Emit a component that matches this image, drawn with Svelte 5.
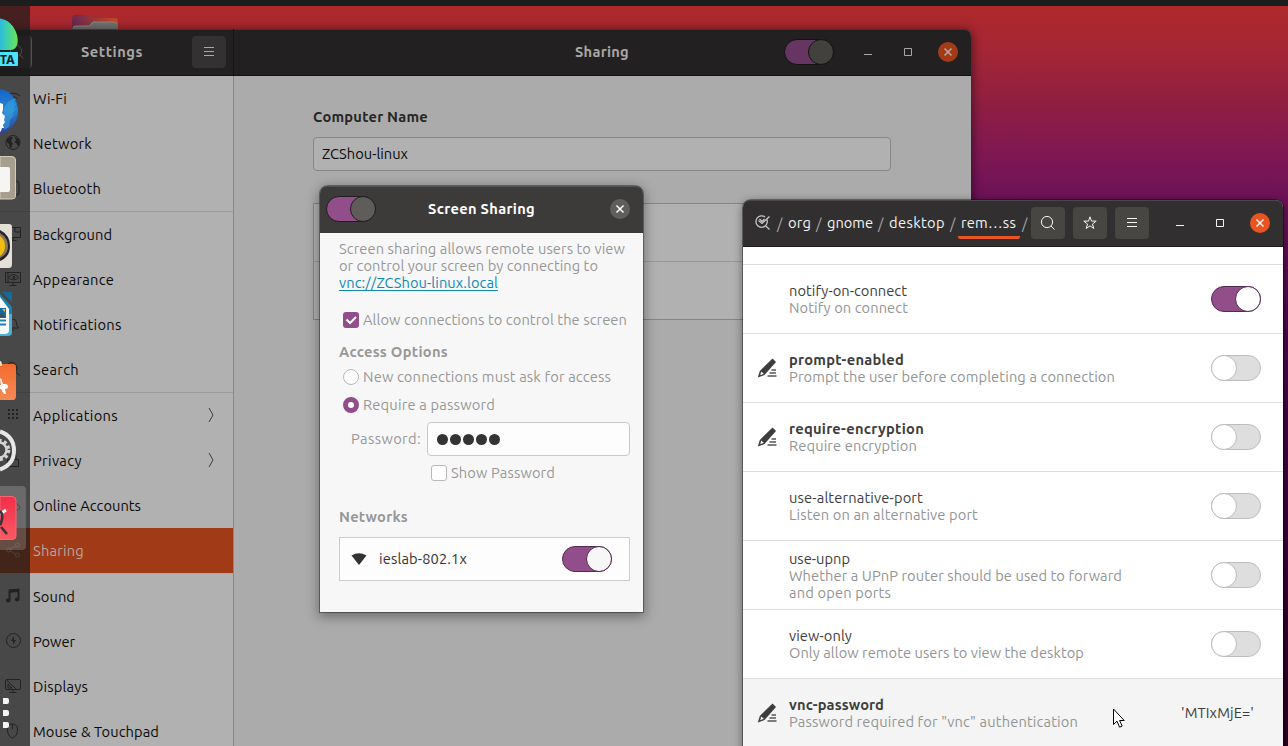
<script lang="ts">
	interface Entry {
		label: string;
		width: number;
		icon: string;
		submenu?: boolean;
		active?: boolean;
	}
	interface Key {
		name: [string, number];
		desc: [string, number][];
		changed?: boolean;
		on?: boolean;
		value?: string;
	}

	// Sidebar entries, one array per separator-delimited group.
	const groups: Entry[][] = [
		[
			{ label: 'Wi-Fi', width: 34, icon: 'wifi' },
			{ label: 'Network', width: 59, icon: 'globe' },
			{ label: 'Bluetooth', width: 68, icon: 'bluetooth' }
		],
		[
			{ label: 'Background', width: 79, icon: 'background' },
			{ label: 'Appearance', width: 81, icon: 'appearance' },
			{ label: 'Notifications', width: 88, icon: 'bell' },
			{ label: 'Search', width: 46, icon: 'search' }
		],
		[
			{ label: 'Applications', width: 85, icon: 'grid', submenu: true },
			{ label: 'Privacy', width: 49, icon: 'lock', submenu: true },
			{ label: 'Online Accounts', width: 108, icon: 'cloud' },
			{ label: 'Sharing', width: 51, icon: 'share', active: true }
		],
		[
			{ label: 'Sound', width: 42, icon: 'note' },
			{ label: 'Power', width: 42, icon: 'power' },
			{ label: 'Displays', width: 55, icon: 'display' },
			{ label: 'Mouse & Touchpad', width: 126, icon: 'mouse' }
		]
	];

	const iconPaths: Record<string, string> = {
		wifi: 'M1 6a10 10 0 0 1 14 0M3.5 8.700a6.500 6.500 0 0 1 9 0M6 11.200a3 3 0 0 1 4 0',
		bluetooth: 'M5 1h7q2 0 2 2v10q0 2-2 2H5z',
		background: 'M.5 1.500h15v10H.5zM10 1.500v4.500h5.500M8 11.500v3M4.500 14.500h7',
		appearance: 'M.5 1.500h15v10H.5zM3 2v9M3.500 6.500q4.500-6 10 0-5 5-10 0M8 5.500v2h1.500v-2zM8 12v3M4.500 14.500h7',
		bell: 'M3 12h10.500q-2-2-2-5 0-4-3.500-4T4.500 7q0 3-2 5M7 14h2',
		search: 'M6.500 1.500a5.500 5.500 0 1 0 0 11 5.500 5.500 0 1 0 0-11M10.800 10.800l4 4',
		lock: 'M2.500 7.500h11v7h-11zM5 7V4q0-3 3-3t3 3v3',
		cloud: 'M3.500 13q-3-.5-2.500-3 .5-2 2.500-2Q4 4 8 4t4.500 4q2.500.5 2.500 2.500T12.500 13z',
		share: 'M3.500 6a2 2 0 1 0 .01 4 2 2 0 1 0 0-4M12.500 1a2 2 0 1 0 .01 4 2 2 0 1 0 0-4M12.500 11a2 2 0 1 0 .01 4 2 2 0 1 0 0-4M5.300 7l5.400-3M5.300 9l5.400 3',
		display: 'M2 1.500h12q1.500 0 1.500 1.500v7q0 1.500-1.500 1.500H2Q.5 11.500.5 10V3Q.5 1.500 2 1.500M2 2.500l9.500 9M3 6v4h4zM8 12v3M4.500 14.500h7',
		mouse: 'M7.500 1q5 0 5 6t-5 8q-5-2-5-8t5-6M7.500 1v5'
	};

	const crumbs: [string, number][] = [['org', 23], ['gnome', 46], ['desktop', 56], ['rem…ss', 55]];

	const keys: Key[] = [
		{ name: ['notify-on-connect', 118], desc: [['Notify on connect', 119]], on: true },
		{ name: ['prompt-enabled', 115], desc: [['Prompt the user before completing a connection', 326]], changed: true },
		{ name: ['require-encryption', 135], desc: [['Require encryption', 128]], changed: true },
		{ name: ['use-alternative-port', 134], desc: [['Listen on an alternative port', 189]] },
		{
			name: ['use-upnp', 61],
			desc: [['Whether a UPnP router should be used to forward', 333], ['and open ports', 102]]
		},
		{ name: ['view-only', 63], desc: [['Only allow remote users to view the desktop', 295]] },
		{
			name: ['vnc-password', 95],
			desc: [['Password required for "vnc" authentication', 289]],
			changed: true,
			value: "'MTIxMjE='"
		}
	];

	// Tracks a label in or out so it takes up the given width.
	function fit(node: HTMLElement, width: number) {
		const chars = node.textContent?.length ?? 0;
		if (chars === 0) return;
		const natural = node.getBoundingClientRect().width;
		node.style.letterSpacing = `${(width - natural) / chars}px`;
	}
</script>

{#snippet txt(text: string, width: number)}
	<span class="txt" use:fit={width}>{text}</span>
{/snippet}

{#snippet toggle(kind: string)}
	<span class="switch {kind}"><i></i></span>
{/snippet}

{#snippet menuIcon()}
	<svg width="12" height="12" viewBox="0 0 12 12"><path d="M1 1.500h10M1 5.500h10M1 9.500h10" /></svg>
{/snippet}

{#snippet searchIcon()}
	<svg width="16" height="16" viewBox="0 0 16 16">
		<circle cx="7" cy="7" r="5.600" /><path d="m11 11 3.500 3.500" />
	</svg>
{/snippet}

{#snippet controls()}
	<div class="controls">
		<svg width="12" height="12" viewBox="0 0 12 12"><path d="M2 8.500h8" /></svg>
		<svg width="12" height="12" viewBox="0 0 12 12"><path d="M2.500 2.500h7v7h-7z" /></svg>
		<span class="close"><svg width="10" height="10" viewBox="0 0 10 10"><path d="m1.500 1.500 7 7m0-7-7 7" /></svg></span>
	</div>
{/snippet}

<div class="desktop">
	<div class="topbar"></div>
	<svg class="folder" width="48" height="20" viewBox="0 0 48 20">
		<defs>
			<linearGradient id="folder"><stop stop-color="#6b2750" /><stop offset="1" stop-color="#c94a20" /></linearGradient>
		</defs>
		<path d="M1 20V4q0-4 4-4h11q2 0 4 3h23q4 0 4 4v13z" fill="url(#folder)" />
		<path d="M1 20v-5q0-4 4-4h13l4-4h21q4 0 4 4v9z" fill="#747070" />
		<path d="M2 12q1-1 3-1h13l4-4h21q2 0 3 2" fill="none" stroke="#8b8785" />
	</svg>

	<section class="window settings">
		<header>
			<div class="side-head">
				<span class="btn search">{@render searchIcon()}</span>
				<h1>{@render txt('Settings', 62)}</h1>
				<span class="btn">{@render menuIcon()}</span>
			</div>
			<div class="main-head">
				<h1>{@render txt('Sharing', 54)}</h1>
				{@render toggle('dim')}
				{@render controls()}
			</div>
		</header>
		<div class="content">
			<nav>
				{#each groups as group}
					<ul>
						{#each group as e (e.label)}
							<li class:active={e.active}>
								<svg width="16" height="16" viewBox="0 0 16 16">
									{#if e.icon === 'grid'}
										<path class="solid" d="M3 2h2v2H3zM7 2h2v2H7zM11 2h2v2h-2zM3 6h2v2H3zM7 6h2v2H7zM11 6h2v2h-2zM3 10h2v2H3zM7 10h2v2H7zM11 10h2v2h-2z" />
									{:else if e.icon === 'note'}
										<path class="solid" d="M3.500 1.500l11-1v10.800a2.300 2 0 1 1-2-1.800V4L5.500 4.700v7.600a2.300 2 0 1 1-2-1.800z" />
									{:else if e.icon === 'globe'}
										<circle cx="8" cy="7.500" r="7" />
										<path class="solid" d="M2 4l4-2.500 2 1.500-2 2 .5 2L8 8.500l-1 2-.5 3L4.500 12l-.5-3L1.500 7zM9.500 2l4.500 2 1 4-2 3.500-1.500-3-2-1L11 5z" />
									{:else if e.icon === 'power'}
										<circle cx="8.500" cy="7.500" r="7" />
										<path class="solid" d="M9 3 6 8h2v4l3-5H9z" />
									{:else}
										<path d={iconPaths[e.icon]} />
									{/if}
								</svg>
								{@render txt(e.label, e.width)}
								{#if e.submenu}
									<svg class="chevron" width="8" height="16" viewBox="0 0 8 16"><path d="m2 1 4 7-4 7" /></svg>
								{/if}
							</li>
						{/each}
					</ul>
				{/each}
			</nav>
			<main>
				<h2>{@render txt('Computer Name', 115)}</h2>
				<div class="field">{@render txt('ZCShou-linux', 86)}</div>
				<div class="services"><div></div><div></div></div>
			</main>
		</div>
	</section>

	<aside class="dock">
		<svg width="30" height="746" viewBox="0 0 30 746">
			<defs>
				<linearGradient id="edge"><stop stop-color="#2bbbe0" /><stop offset=".5" stop-color="#45d49b" /><stop offset="1" stop-color="#6de44d" /></linearGradient>
				<linearGradient id="bird" x2="0" y2="1"><stop stop-color="#1763c7" /><stop offset=".45" stop-color="#2585d2" /><stop offset="1" stop-color="#313d9a" /></linearGradient>
				<linearGradient id="shop" x2="0" y2="1"><stop stop-color="#f26b2e" /><stop offset="1" stop-color="#f58a55" /></linearGradient>
				<linearGradient id="dconf" x2="0" y2="1"><stop stop-color="#f22e49" /><stop offset="1" stop-color="#fa5964" /></linearGradient>
			</defs>
			<path d="M0 18.500q8 1 13 8 6 9 4.500 17-1.500 6.500-6.500 6.500H0z" fill="url(#edge)" />
			<path d="M0 52h17q1 0 1 1v12q0 1-1 1H0z" fill="#4ae3fb" />
			<text x="0" y="63.500" textLength="14.500" lengthAdjust="spacingAndGlyphs">TA</text>

			<path d="M0 89q9 1 14 9 4 6 4 13 0 8-5 14-5 7-13 9z" fill="url(#bird)" />
			<path d="m4 107 5-6 7-3-2 6 3-2-4 8 4-3-5 8 3-1-5 6-1 7-5 3z" fill="#3aa8df" opacity=".55" />
			<path d="M0 103l3 1v6l-1 3 3 3-1 4 1 2-2 3 1 3-2 0-1 3-1 1z" fill="#fff" />

			<path d="M0 156.500h12q3.500 0 3.500 3.500v36q0 3-3.500 3H0z" fill="#a69f8e" stroke="#d1ccb9" />
			<path d="M0 167h8q2 0 2 2v21q0 2-2 2H0z" fill="#f6f5f4" />

			<path d="M0 224h9q3 0 3 3v37q0 4-3 4H0z" fill="#e5e0d6" />
			<path d="M0 230q10 5 10 16T0 261z" fill="#262432" />
			<path d="M0 233q8 5 8 13T0 258z" fill="#8b7b55" />
			<path d="M0 236q5 4 5 10t-5 10z" fill="#f1bd12" />

			<path d="M2 292h10v10z" fill="#116b9f" />
			<path d="M0 294l12 13v25q0 4-4 4H0z" fill="#1884b5" />
			<path d="M8 314h4v18q0 4-4 4H0v-3h6q2 0 2-2z" fill="#4bafd6" />
			<path d="M0 297l9 12v21q0 4-4 4H0z" fill="#fafafa" />
			<path d="M0 308h6v10H0z" fill="#166d9b" />
			<path d="M0 315l2-2 3 4H0z" fill="#35505c" /><path d="M2 309h3v3z" fill="#eec42a" />
			<path d="M0 320.500h6M0 324.500h6" stroke="#1884b5" stroke-width="2" />

			<path d="M0 364h13q3 0 3 3v29q0 4-3 4H0z" fill="url(#shop)" />
			<path d="M0 361q2 0 2 5H0z" fill="#eee4bf" />
			<path d="m0 379 1-1 2 6h2q3 0 3 2.500T5 389l1 5H4l-3-5H0v-4h1z" fill="#fff" />

			<path d="M0 431.500q14 5 14 19T0 469.500" fill="none" stroke="#e7e7e7" stroke-width="4" />
			<circle cx="-1" cy="450" r="7.500" fill="none" stroke="#d4d4d4" stroke-width="2.500" />
			<circle cx="-1" cy="450" r="9.500" fill="none" stroke="#d4d4d4" stroke-width="3.500" stroke-dasharray="3 2.500" />

			<path d="M0 486h22q4 0 4 4v56q0 4-4 4H0z" fill="#fff" opacity=".19" />
			<path d="M0 496.500h12q4 0 4 4v36q0 3-4 3H0z" fill="url(#dconf)" stroke="#f66772" />
			<path d="m0 514 6-4" stroke="#fff" stroke-width="3" />
			<path d="M0 511q3 3 2 8t-2 6M1 527l6 7" fill="none" stroke="#37343a" stroke-width="2.600" />
			<path d="M5 698h2q2 0 2 2v2q0 2-2 2H3V698zM5 710h2q2 0 2 2v2q0 2-2 2H3V710zM5 722h2q2 0 2 2v2q0 2-2 2H3V722z" fill="#f4f4f4" />
		</svg>
	</aside>

	<section class="window dialog">
		<header>
			{@render toggle('muted')}
			<h1>{@render txt('Screen Sharing', 107)}</h1>
			<span class="close"><svg width="10" height="10" viewBox="0 0 10 10"><path d="m1.500 1.500 7 7m0-7-7 7" /></svg></span>
		</header>
		<div class="body">
			<p>
				{@render txt('Screen sharing allows remote users to view', 286)}<br />
				{@render txt('or control your screen by connecting to', 259)}<br />
				<a href="vnc://ZCShou-linux.local">{@render txt('vnc://ZCShou-linux.local', 159)}</a>
			</p>
			<div class="option allow">
				<span class="box checked"><svg width="16" height="16" viewBox="0 0 16 16"><path d="m3.500 7.500 3.500 3.500 6-6" /></svg></span>
				{@render txt('Allow connections to control the screen', 264)}
			</div>
			<h2>{@render txt('Access Options', 109)}</h2>
			<div class="option"><span class="radio"></span>{@render txt('New connections must ask for access', 248)}</div>
			<div class="option"><span class="radio checked"></span>{@render txt('Require a password', 132)}</div>
			<div class="password">
				<span>{@render txt('Password:', 70)}</span>
				<div class="entry">{#each Array(5) as _}<i></i>{/each}</div>
			</div>
			<div class="option show"><span class="box"></span>{@render txt('Show Password', 104)}</div>
			<h2 class="nets">{@render txt('Networks', 69)}</h2>
			<div class="network">
				<svg width="16" height="14" viewBox="0 0 16 14"><path d="M.5 3.500Q8-1 15.500 3.500L8 13z" /></svg>
				{@render txt('ieslab-802.1x', 88)}
				{@render toggle('on soft')}
			</div>
		</div>
	</section>

	<section class="window dconf">
		<header>
			<svg class="logo" width="16" height="16" viewBox="0 0 16 16">
				<path d="M12 4.500q1 4-1.500 6.300A5.700 5.700 0 1 1 10 2M10.500 10.800l4 3.700" />
				<path d="M3.500 5.500 7 8.500l7.500-7" />
				<path d="M4.500 4 7 6.500 9.500 4" />
			</svg>
			<div class="crumbs">
				{#each crumbs as [name, width], i}
					<b>/</b><span class="crumb" class:current={i === crumbs.length - 1}>{@render txt(name, width)}</span>
				{/each}
				<b>/</b>
			</div>
			<div class="tools">
				<span class="btn">{@render searchIcon()}</span>
				<span class="btn">
					<svg width="16" height="16" viewBox="0 0 16 16">
						<path d="m8 1.800 1.500 4.300h4.700l-3.700 2.900 1.300 4.500L8 10.800l-3.800 2.700L5.500 9 1.800 6.100h4.700z" />
					</svg>
				</span>
				<span class="btn">{@render menuIcon()}</span>
			</div>
			{@render controls()}
		</header>
		<div class="keys">
			<div class="key partial"></div>
			{#each keys as k (k.name[0])}
				<div class="key" class:changed={k.changed} class:hover={k.value}>
					<div class="mark">
						{#if k.changed}
							<svg width="20" height="20" viewBox="0 0 20 20">
								<path d="m15.500.5 3.500 3.500L7.500 17 .8 19.500 2.800 13z" />
								<path class="tip" d="m4.200 13.600 2.600 2.200-3.500 1.500z" />
								<path class="lines" d="M14.500 12h4.500M12.500 15h6.500M10.500 18h9" />
							</svg>
						{/if}
					</div>
					<div class="info">
						<div class="name">{@render txt(k.name[0], k.name[1])}</div>
						{#each k.desc as [line, width]}
							<div class="desc">{@render txt(line, width)}</div>
						{/each}
					</div>
					{#if k.value}
						<div class="value">{@render txt(k.value, 73)}</div>
					{:else}
						{@render toggle(k.on ? 'on' : 'off')}
					{/if}
				</div>
			{/each}
		</div>
	</section>

	<svg class="cursor" width="14" height="21" viewBox="0 0 14 21">
		<path d="M1.500 1v15.500l3.500-3.300 2.600 6 2.600-1.200-2.600-5.500h4.600z" />
	</svg>
</div>

<style>
	:global(body) {
		overflow: hidden;
	}
	.desktop {
		position: relative;
		width: 1288px;
		height: 746px;
		overflow: hidden;
		font: 14.667px/17px Ubuntu, 'Noto Sans', sans-serif;
		background: linear-gradient(#ae292a 6px, #a42636 50px, #8f1e42 105px, #7b1655 165px, #6c1256 200px, #4b064c 330px, #3b0238 500px, #2a0021 746px);
	}
	.desktop * {
		box-sizing: border-box;
	}
	h1,
	h2,
	p,
	ul {
		margin: 0;
		padding: 0;
		font-size: inherit;
		list-style: none;
	}
	svg {
		display: block;
		flex: none;
		fill: none;
		stroke: currentColor;
	}
	/* Lifted a pixel so the glyphs sit optically centred in their row */
	.txt {
		display: inline-block;
		margin: -1px 0 1px;
		vertical-align: top;
		white-space: pre;
	}
	.topbar {
		height: 6px;
		background: #1d1d1d;
	}
	.folder {
		position: absolute;
		left: 71px;
		top: 15px;
		stroke: none;
	}
	.window {
		position: absolute;
		border-radius: 8px 8px 0 0;
	}
	.window > header {
		display: flex;
		align-items: center;
		height: 47px;
		border-radius: 7px 7px 0 0;
	}
	.btn {
		display: grid;
		place-items: center;
		width: 34px;
		height: 32px;
		border-radius: 4px;
		background: #474643;
	}
	.controls {
		display: flex;
		align-items: center;
		gap: 28px;
	}
	.controls .close {
		margin-left: -4px;
	}
	.close {
		display: grid;
		place-items: center;
		width: 20px;
		height: 20px;
		border-radius: 50%;
		background: #e95420;
	}
	.close svg {
		stroke-width: 1.5;
	}
	.switch {
		display: flex;
		flex: none;
		width: 50px;
		height: 26px;
		border: 1px solid #bdbdbd;
		border-radius: 13px;
		background: #dedede;
	}
	.switch i {
		width: 26px;
		height: 26px;
		margin: -1px;
		border: 1px solid #bdbdbd;
		border-radius: 50%;
		background: #fff;
	}
	.switch:not(.off) {
		justify-content: flex-end;
		border-color: #532a50;
		background: #924d8b;
	}
	.switch:not(.off) i {
		border-color: #532a50;
	}
	.switch.soft i {
		background: #f7f7f7;
	}
	.switch.muted,
	.switch.muted i {
		border-color: #201f1f;
	}
	.switch.muted i {
		background: #5f5c5a;
	}
	.switch.dim {
		border-color: #141313;
		background: #663561;
	}
	.switch.dim i {
		border-color: #141313;
		background: #43413e;
	}

	/* Settings window, dimmed behind its modal dialog */
	.settings {
		left: 0;
		top: 29px;
		width: 971px;
		height: 760px;
		box-shadow: 0 2px 10px 2px rgba(0, 0, 0, 0.45);
		background: #ababab;
		color: #0a0a0a;
	}
	.settings > header {
		background: #232021;
		box-shadow: inset 0 1px #3a3738;
		border-bottom: 1px solid #121011;
		border-top-left-radius: 0;
		color: #aaa7a4;
	}
	.side-head {
		display: flex;
		align-items: center;
		justify-content: space-between;
		width: 234px;
		height: 100%;
		padding-right: 7px;
		border-right: 1px solid #171516;
	}
	.settings .btn {
		background: #343132;
	}
	.side-head .search {
		width: 32px;
		border-radius: 0 4px 4px 0;
		border-right: 1px solid #504d4e;
		padding-left: 3px;
	}
	.main-head {
		display: grid;
		grid-template-columns: 1fr auto auto;
		align-items: center;
		flex: 1;
		padding-right: 13px;
	}
	.main-head h1 {
		padding-left: 341px;
	}
	.main-head .controls {
		margin-left: 28px;
	}
	.settings .close {
		background: #a33b17;
		color: #b5aaa6;
	}
	.content {
		display: flex;
		height: 670px;
		overflow: hidden;
	}
	nav {
		width: 234px;
		border-right: 1px solid #878787;
		background: #b1b1b1;
	}
	nav ul + ul {
		border-top: 1px solid #9c9c9c;
	}
	nav ul:last-child {
		border-color: #aaa;
	}
	nav li {
		display: flex;
		align-items: center;
		gap: 12px;
		height: 45px;
		padding: 1px 18px 0 5px;
	}
	nav li svg:first-child {
		margin-top: -2px;
		color: #333;
	}
	nav .active {
		background: #a13a16;
		color: #b6a6a0;
	}
	nav .active svg:first-child {
		color: #b6a6a0;
	}
	nav .solid {
		fill: #333;
		stroke: none;
	}
	nav .chevron {
		margin: -2px 0 0 auto;
		color: #3d3d3d;
	}
	main {
		flex: 1;
		padding: 33px 80px 0 79px;
	}
	main h2 {
		color: #262626;
	}
	.field {
		margin-top: 11px;
		height: 34px;
		padding: 8px;
		border: 1px solid #878787;
		border-radius: 4px;
		background: #b1b1b1;
	}
	.services {
		margin-top: 32px;
		border: 1px solid #858585;
		background: #b1b1b1;
	}
	.services div {
		height: 57px;
	}
	.services div + div {
		height: 58px;
		border-top: 1px solid #999;
	}

	.dock {
		position: absolute;
		left: 0;
		top: 0;
		width: 30px;
		height: 746px;
	}
	.dock::before {
		content: '';
		position: absolute;
		inset: 6px 0 0;
		background: rgba(27, 27, 27, 0.7);
	}
	.dock svg {
		position: relative;
		stroke: none;
	}
	.dock text {
		font: bold 12px 'Noto Sans', sans-serif;
		fill: #101820;
	}

	/* Screen sharing dialog */
	.dialog {
		left: 320px;
		top: 186px;
		width: 323px;
		height: 426px;
		background: #f7f7f7;
		box-shadow: 0 0 0 1px rgba(0, 0, 0, 0.35), 0 3px 12px 2px rgba(0, 0, 0, 0.35);
		color: #979797;
	}
	.dialog > header {
		padding: 0 13px 1px 6px;
		background: #3d3b39;
		box-shadow: inset 0 1px #535150;
		color: #fff;
	}
	.dialog header h1 {
		margin: 0 auto 0 52px;
	}
	.dialog .close {
		background: #605e5c;
	}
	.body {
		padding: 8px 13px 0 19px;
	}
	.body a {
		color: #0f87b5;
		text-decoration: none;
	}
	.body a .txt {
		height: 17px;
		border-bottom: 1px solid #0f87b5;
	}
	.body p {
		height: 51px;
	}
	.option {
		display: flex;
		align-items: center;
		gap: 4px;
		height: 28px;
		padding-left: 4px;
		white-space: nowrap;
	}
	.allow {
		margin: 14px 0 10px;
	}
	.body h2 {
		margin-bottom: 2px;
	}
	.box,
	.radio {
		flex: none;
		width: 16px;
		height: 16px;
		border: 1px solid #b8b8b8;
		border-radius: 3px;
		background: #fff;
	}
	.radio {
		border-radius: 50%;
	}
	.box.checked {
		border: 0;
		background: #924d8b;
		color: #fff;
	}
	.box svg {
		stroke-width: 2;
	}
	.radio.checked {
		border: 5px solid #924d8b;
	}
	.password {
		display: flex;
		align-items: center;
		justify-content: flex-end;
		gap: 6px;
		margin-top: 3px;
	}
	.entry {
		display: flex;
		align-items: center;
		gap: 2px;
		width: 203px;
		height: 34px;
		padding: 1px 0 0 9px;
		border: 1px solid #c9c9c9;
		border-radius: 4px;
		background: #fdfdfd;
	}
	.entry i {
		width: 11px;
		height: 11px;
		border-radius: 50%;
		background: #333;
	}
	.show {
		margin-top: 3px;
		padding-left: 92px;
	}
	.body .nets {
		margin: 22px 0 11px;
	}
	.network {
		display: flex;
		align-items: center;
		gap: 12px;
		width: 291px;
		height: 44px;
		padding: 0 17px 0 11px;
		border: 1px solid #cdcdcd;
		background: #fdfdfd;
		color: #333;
	}
	.network svg {
		fill: #333;
		stroke: none;
	}
	.network .switch {
		margin-left: auto;
	}

	/* dconf-editor */
	.dconf {
		left: 743px;
		top: 200px;
		width: 540px;
		height: 600px;
		background: #fff;
		box-shadow: 0 0 0 1px rgba(0, 0, 0, 0.35), 0 2px 8px 1px rgba(0, 0, 0, 0.4);
		color: #3d3d3d;
	}
	.dconf > header {
		padding: 0 13px 0 12px;
		background: #322f30;
		box-shadow: inset 0 1px #4a4748;
		border-bottom: 1px solid #1d1b1c;
		color: #f4f4f4;
	}
	.logo {
		margin-bottom: 1px;
		stroke-width: 1.3;
		color: #c9c7c6;
	}
	.crumbs {
		display: flex;
		align-items: center;
		margin-left: 6px;
		white-space: nowrap;
	}
	.crumbs b {
		width: 6px;
		font-weight: normal;
		color: #a8a6a5;
	}
	.crumb {
		padding: 8px 5px 4px;
		border-bottom: 3px solid transparent;
	}
	.crumb.current {
		padding: 8px 4px 4px 3px;
		margin: 0 2px;
		border-color: #e95420;
		border-radius: 2px;
	}
	.tools {
		display: flex;
		gap: 8px;
		margin-left: auto;
	}
	.dconf .controls {
		margin-left: 25px;
	}
	.keys {
		height: 499px;
		overflow: hidden;
	}
	.key {
		display: flex;
		align-items: center;
		height: 69px;
		padding-right: 22px;
		border-bottom: 1px solid #dfdfdf;
	}
	.partial {
		height: 18px;
	}
	.mark {
		width: 46px;
		padding-left: 14px;
	}
	.mark svg {
		fill: #3d3d3d;
		stroke: none;
	}
	.mark .tip {
		fill: #fff;
	}
	.mark .lines {
		stroke: #555;
		stroke-width: 1.6;
	}
	.info {
		flex: 1;
	}
	.info .txt {
		margin: 0;
	}
	.changed .name {
		font-weight: bold;
	}
	.desc {
		color: #929595;
	}
	.hover {
		background: #f4f4f4;
	}
	.value {
		margin-right: 7px;
	}
	.cursor {
		position: absolute;
		left: 1112px;
		top: 708px;
	}
	.cursor path {
		fill: #fff;
		stroke: #000;
	}
</style>
